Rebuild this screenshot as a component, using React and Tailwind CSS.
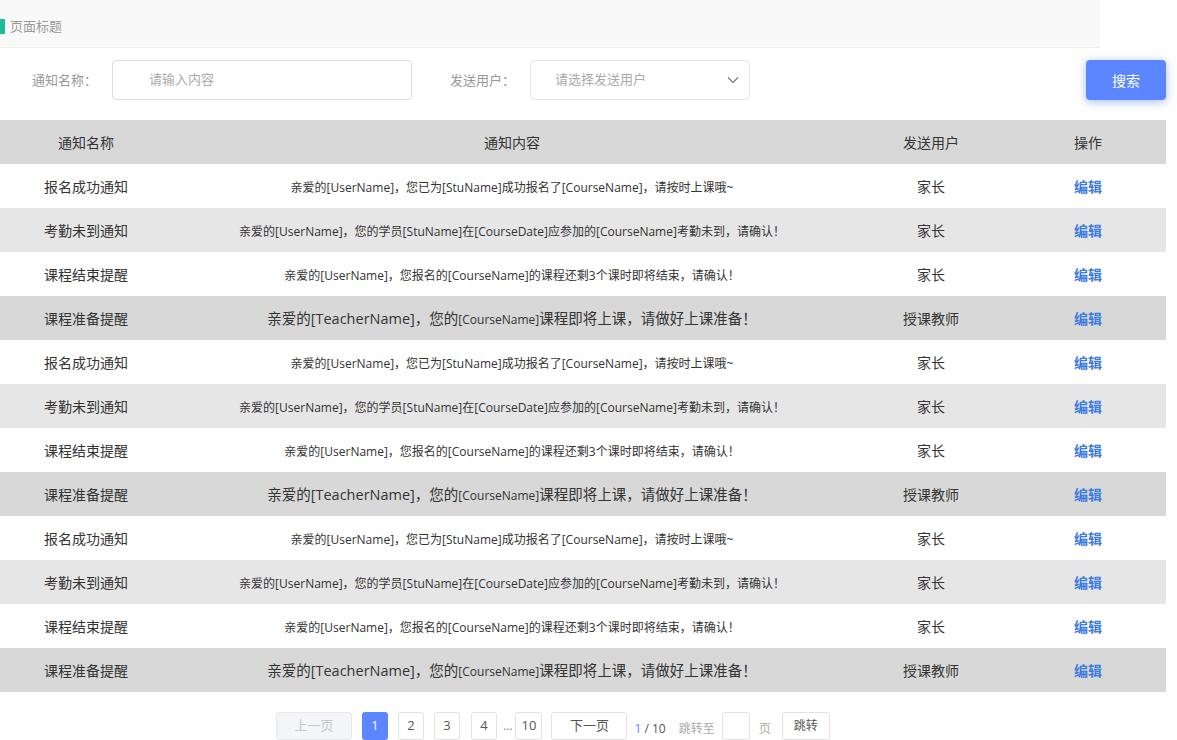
import React from 'react';

const rows = [
  { name: '报名成功通知', user: '家长', kind: 'a' },
  { name: '考勤未到通知', user: '家长', kind: 'b' },
  { name: '课程结束提醒', user: '家长', kind: 'c' },
  { name: '课程准备提醒', user: '授课教师', kind: 'd' },
];

const rowBg = ['bg-white', 'bg-[#e6e6e6]', 'bg-white', 'bg-[#d8d8d8]'];

function Content({ kind }) {
  if (kind === 'a') return <span className="text-[12px]">亲爱的[UserName]，您已为[StuName]成功报名了[CourseName]，请按时上课哦~</span>;
  if (kind === 'b') return <span className="text-[12px]">亲爱的[UserName]，您的学员[StuName]在[CourseDate]应参加的[CourseName]考勤未到，请确认！</span>;
  if (kind === 'c') return <span className="text-[12px]">亲爱的[UserName]，您报名的[CourseName]的课程还剩3个课时即将结束，请确认！</span>;
  return (
    <span className="text-[14.5px]">
      亲爱的[TeacherName]，您的<span className="text-[12px]">[CourseName]</span>课程即将上课，请做好上课准备！
    </span>
  );
}

export default function App() {
  const all = [...rows, ...rows, ...rows];
  return (
    <div className="w-[1177px] h-[740px] overflow-hidden bg-white text-[#333] font-['Open_Sans','Noto_Sans_CJK_SC',sans-serif]">
      {/* page title */}
      <div className="w-[1100px] h-[48px] bg-[#f9f9f9] border-b border-[#f0f0f0] flex items-center pt-[6px]">
        <div className="w-[5px] h-[15px] bg-[#1abc9c]" />
        <span className="ml-[5px] text-[13px] text-[#999]">页面标题</span>
      </div>

      {/* search bar */}
      <div className="h-[72px] flex items-start pt-[12px] w-[1166px]">
        <span className="ml-[32px] w-[80px] leading-[40px] text-[13px] text-[#999]">通知名称：</span>
        <div className="w-[300px] h-[40px] border border-[#dcdcdc] rounded-[4px] flex items-center pl-[36px] text-[13px] text-[#aaa]">
          请输入内容
        </div>
        <span className="ml-[38px] w-[80px] leading-[40px] text-[13px] text-[#999]">发送用户：</span>
        <div className="w-[220px] h-[40px] border border-[#e4e4e4] rounded-[4px] flex items-center justify-between pl-[24px] pr-[8px] text-[13px] text-[#aaa]">
          请选择发送用户
          <svg width="16" height="16" viewBox="0 0 16 16" fill="none" stroke="#777" strokeWidth="1.2">
            <path d="M3 5.5l5 5 5-5" />
          </svg>
        </div>
        <button className="ml-auto w-[80px] h-[40px] rounded-[4px] bg-[#5b86ff] text-white text-[14px] shadow-[0_2px_10px_rgba(91,134,255,0.55)]">
          搜索
        </button>
      </div>

      {/* table */}
      <div className="w-[1166px]">
        <div className="grid grid-cols-[172px_680px_158px_156px] h-[44px] bg-[#d8d8d8] items-center text-center text-[14px]">
          <div>通知名称</div>
          <div>通知内容</div>
          <div>发送用户</div>
          <div>操作</div>
        </div>
        {all.map((r, i) => (
          <div key={i} className={`grid grid-cols-[172px_680px_158px_156px] h-[44px] items-center text-center ${rowBg[i % 4]}`}>
            <div className="text-[14px]">{r.name}</div>
            <div><Content kind={r.kind} /></div>
            <div className="text-[14px]">{r.user}</div>
            <div className="text-[14px] font-bold text-[#3d7be0]">编辑</div>
          </div>
        ))}
      </div>

      {/* pagination */}
      <div className="flex items-center w-[1100px] mt-[20px] pl-[276px] text-[13px]">
        <div className="w-[76px] h-[28px] flex items-center justify-center border border-[#e6e8ec] rounded-[3px] bg-[#f4f5f7] text-[#c5c8ce]">上一页</div>
        <div className="ml-[10px] w-[26px] h-[28px] flex items-center justify-center rounded-[3px] bg-[#5b86ff] text-white">1</div>
        <div className="ml-[10px] w-[26px] h-[28px] flex items-center justify-center border border-[#e2e2e2] rounded-[3px] text-[#555]">2</div>
        <div className="ml-[10px] w-[26px] h-[28px] flex items-center justify-center border border-[#e2e2e2] rounded-[3px] text-[#555]">3</div>
        <div className="ml-[11px] w-[26px] h-[28px] flex items-center justify-center border border-[#e2e2e2] rounded-[3px] text-[#555]">4</div>
        <span className="ml-[6px] mr-[3px] text-[#888] text-[12px]">...</span>
        <div className="w-[27px] h-[28px] flex items-center justify-center border border-[#e2e2e2] rounded-[3px] text-[#555]">10</div>
        <div className="ml-[9px] w-[76px] h-[28px] flex items-center justify-center border border-[#e2e2e2] rounded-[3px] text-[#555]">下一页</div>
        <span className="ml-[7px] mt-[6px] text-[12px] text-[#555]"><span className="text-[#5b86ff]">1</span> / 10</span>
        <span className="ml-[13px] mt-[6px] text-[12px] text-[#aaa]">跳转至</span>
        <div className="ml-[7px] w-[28px] h-[28px] border border-[#e2e2e2] rounded-[3px]" />
        <span className="ml-[9px] mt-[6px] text-[12px] text-[#aaa]">页</span>
        <div className="ml-[11px] w-[48px] h-[28px] flex items-center justify-center border border-[#e2e2e2] rounded-[3px] text-[12px] text-[#555]">跳转</div>
      </div>
    </div>
  );
}
